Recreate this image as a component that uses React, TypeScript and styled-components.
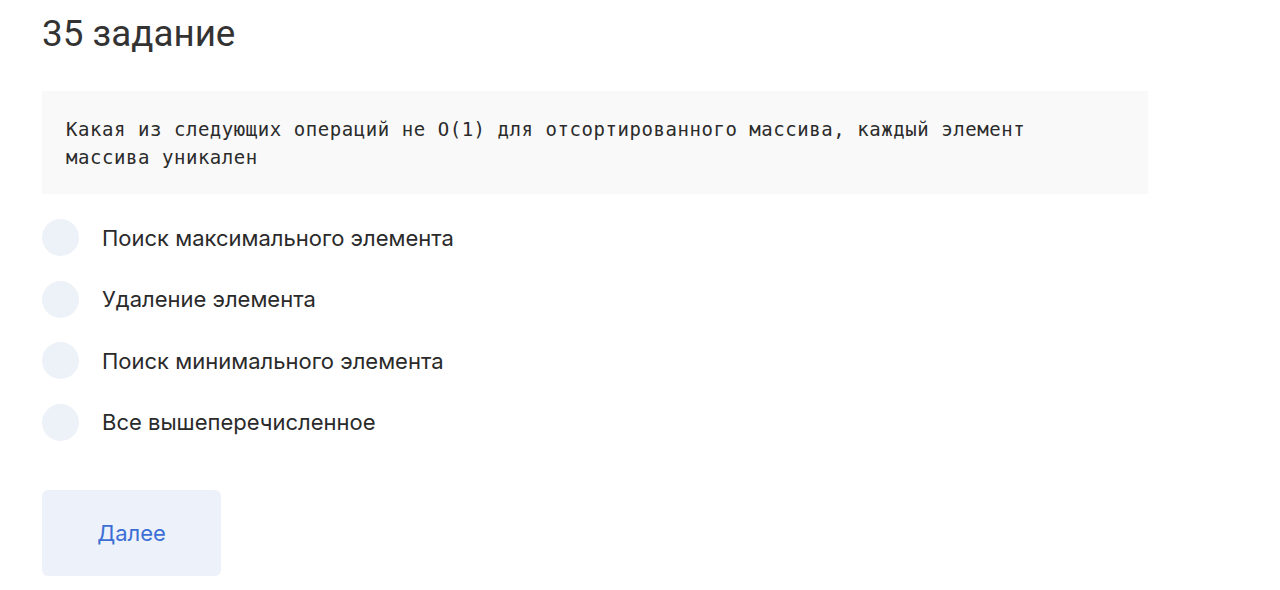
import React from "react";
import styled, { createGlobalStyle } from "styled-components";

const Global = createGlobalStyle`
  html, body { margin: 0; padding: 0; background: #ffffff; }
  body { font-family: Inter, "Noto Sans", sans-serif; color: #2e2e2e; }
`;

const Page = styled.main`
  padding: 11px 0 0 42px;
  width: 1106px;
  display: flex;
  flex-direction: column;
`;

const Title = styled.h1`
  margin: 0;
  font-family: Roboto, "Noto Sans", sans-serif;
  font-weight: 400;
  font-size: 36.8px;
  line-height: 46px;
  color: #333333;
`;

const Question = styled.pre`
  margin: 34px 0 0 0;
  padding: 24px 60px 23px 24px;
  background: #f9f9f9;
  font-family: "DejaVu Sans Mono", "Liberation Mono", monospace;
  font-size: 19px;
  letter-spacing: 0.55px;
  line-height: 28px;
  color: #2b2b2b;
  white-space: pre-wrap;
`;

const Options = styled.div`
  margin-top: 25px;
  display: flex;
  flex-direction: column;
  gap: 24.5px;
`;

const Option = styled.label`
  display: flex;
  align-items: center;
  gap: 23px;
  height: 37px;
  cursor: pointer;
`;

const Circle = styled.span`
  width: 37px;
  height: 37px;
  border-radius: 50%;
  background: #edf1f8;
  flex-shrink: 0;
`;

const OptionText = styled.span`
  font-size: 22px;
  color: #2a2a2a;
`;

const NextButton = styled.button`
  margin-top: 49px;
  width: 179px;
  height: 86px;
  border: none;
  border-radius: 6px;
  background: #edf1f9;
  color: #3b6fd6;
  font-family: Inter, "Noto Sans", sans-serif;
  font-size: 22px;
  cursor: pointer;
`;

const options = [
  "Поиск максимального элемента",
  "Удаление элемента",
  "Поиск минимального элемента",
  "Все вышеперечисленное",
];

export default function App() {
  return (
    <>
      <Global />
      <Page>
        <Title>35 задание</Title>
        <Question>
          Какая из следующих операций не O(1) для отсортированного массива, каждый элемент массива уникален
        </Question>
        <Options>
          {options.map((o) => (
            <Option key={o}>
              <Circle />
              <OptionText>{o}</OptionText>
            </Option>
          ))}
        </Options>
        <NextButton>Далее</NextButton>
      </Page>
    </>
  );
}
